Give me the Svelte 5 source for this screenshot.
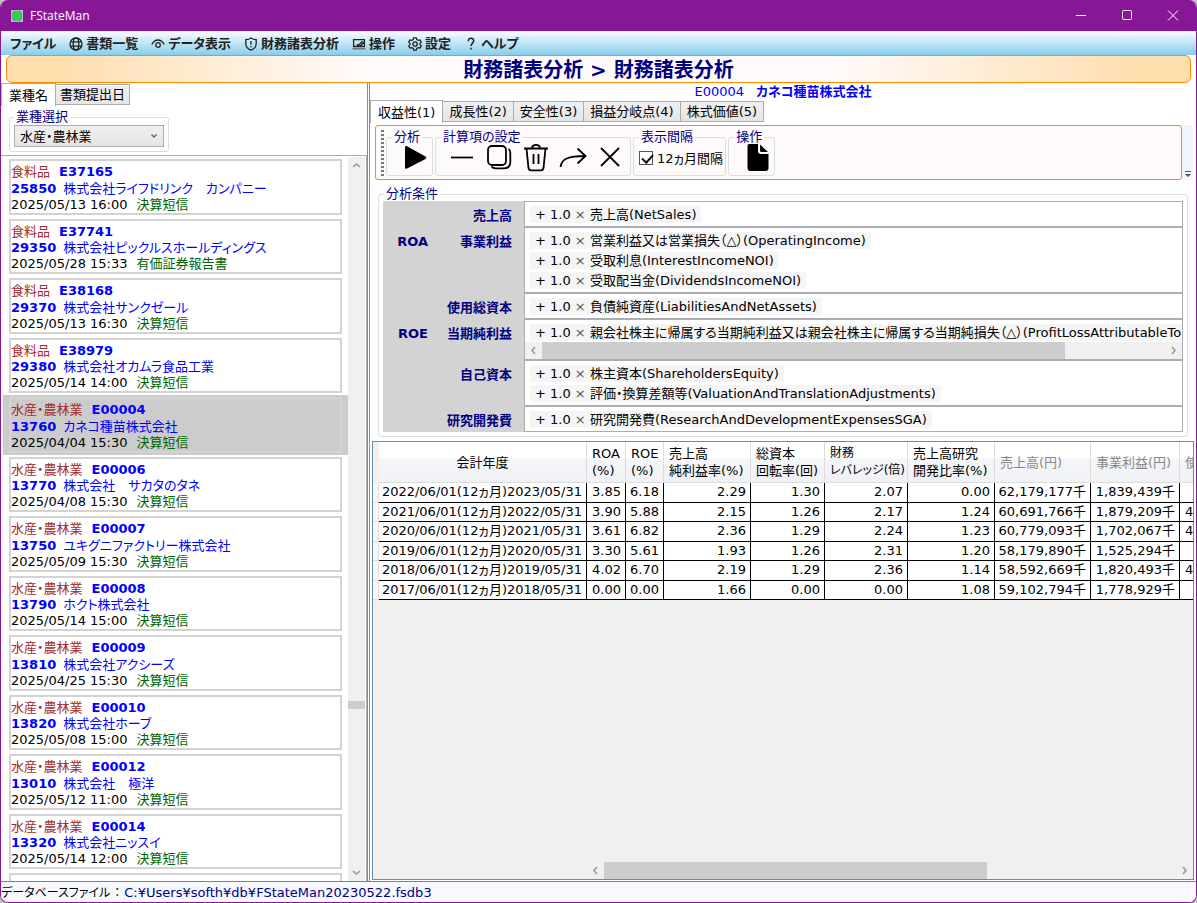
<script lang="ts">
 interface Company {
  sector: string
  edinet: string
  code: string
  name: string
  date: string
  doc: string
 }

 const menus = [
  { icon: '', label: 'ファイル' },
  { icon: 'globe', label: '書類一覧' },
  { icon: 'eye', label: 'データ表示' },
  { icon: 'shield', label: '財務諸表分析' },
  { icon: 'laptop', label: '操作' },
  { icon: 'gear', label: '設定' },
  { icon: 'help', label: 'ヘルプ' }
 ]

 const companies: Company[] = [
  { sector: '食料品', edinet: 'E37165', code: '25850', name: '株式会社ライフドリンク　カンパニー', date: '2025/05/13 16:00', doc: '決算短信' },
  { sector: '食料品', edinet: 'E37741', code: '29350', name: '株式会社ピックルスホールディングス', date: '2025/05/28 15:33', doc: '有価証券報告書' },
  { sector: '食料品', edinet: 'E38168', code: '29370', name: '株式会社サンクゼール', date: '2025/05/13 16:30', doc: '決算短信' },
  { sector: '食料品', edinet: 'E38979', code: '29380', name: '株式会社オカムラ食品工業', date: '2025/05/14 14:00', doc: '決算短信' },
  { sector: '水産・農林業', edinet: 'E00004', code: '13760', name: 'カネコ種苗株式会社', date: '2025/04/04 15:30', doc: '決算短信' },
  { sector: '水産・農林業', edinet: 'E00006', code: '13770', name: '株式会社　サカタのタネ', date: '2025/04/08 15:30', doc: '決算短信' },
  { sector: '水産・農林業', edinet: 'E00007', code: '13750', name: 'ユキグニファクトリー株式会社', date: '2025/05/09 15:30', doc: '決算短信' },
  { sector: '水産・農林業', edinet: 'E00008', code: '13790', name: 'ホクト株式会社', date: '2025/05/14 15:00', doc: '決算短信' },
  { sector: '水産・農林業', edinet: 'E00009', code: '13810', name: '株式会社アクシーズ', date: '2025/04/25 15:30', doc: '決算短信' },
  { sector: '水産・農林業', edinet: 'E00010', code: '13820', name: '株式会社ホーブ', date: '2025/05/08 15:00', doc: '決算短信' },
  { sector: '水産・農林業', edinet: 'E00012', code: '13010', name: '株式会社　極洋', date: '2025/05/12 11:00', doc: '決算短信' },
  { sector: '水産・農林業', edinet: 'E00014', code: '13320', name: '株式会社ニッスイ', date: '2025/05/14 12:00', doc: '決算短信' }
 ]

 const tabs = ['収益性(1)', '成長性(2)', '安全性(3)', '損益分岐点(4)', '株式価値(5)']

 const conditions = [
  { group: '', label: '売上高', terms: ['売上高(NetSales)'] },
  {
   group: 'ROA',
   label: '事業利益',
   terms: ['営業利益又は営業損失（△）(OperatingIncome)', '受取利息(InterestIncomeNOI)', '受取配当金(DividendsIncomeNOI)']
  },
  { group: '', label: '使用総資本', terms: ['負債純資産(LiabilitiesAndNetAssets)'] },
  {
   group: 'ROE',
   label: '当期純利益',
   terms: ['親会社株主に帰属する当期純利益又は親会社株主に帰属する当期純損失（△）(ProfitLossAttributableTo'],
   scroll: true
  },
  { group: '', label: '自己資本', terms: ['株主資本(ShareholdersEquity)', '評価・換算差額等(ValuationAndTranslationAdjustments)'] },
  { group: '', label: '研究開発費', terms: ['研究開発費(ResearchAndDevelopmentExpensesSGA)'] }
 ]

 const columns = [
  { lines: ['会計年度'], width: 208 },
  { lines: ['ROA', '(%)'], width: 39 },
  { lines: ['ROE', '(%)'], width: 38 },
  { lines: ['売上高', '純利益率(%)'], width: 87 },
  { lines: ['総資本', '回転率(回)'], width: 74 },
  { lines: ['財務', 'レバレッジ(倍)'], width: 83, narrow: true },
  { lines: ['売上高研究', '開発比率(%)'], width: 87 },
  { lines: ['売上高(円)'], width: 96, muted: true },
  { lines: ['事業利益(円)'], width: 89, muted: true },
  { lines: ['使'], width: 97, muted: true }
 ]

 const rows = [
  ['2022/06/01(12ヵ月)2023/05/31', '3.85', '6.18', '2.29', '1.30', '2.07', '0.00', '62,179,177千', '1,839,439千', ''],
  ['2021/06/01(12ヵ月)2022/05/31', '3.90', '5.88', '2.15', '1.26', '2.17', '1.24', '60,691,766千', '1,879,209千', '4'],
  ['2020/06/01(12ヵ月)2021/05/31', '3.61', '6.82', '2.36', '1.29', '2.24', '1.23', '60,779,093千', '1,702,067千', '4'],
  ['2019/06/01(12ヵ月)2020/05/31', '3.30', '5.61', '1.93', '1.26', '2.31', '1.20', '58,179,890千', '1,525,294千', ''],
  ['2018/06/01(12ヵ月)2019/05/31', '4.02', '6.70', '2.19', '1.29', '2.36', '1.14', '58,592,669千', '1,820,493千', '4'],
  ['2017/06/01(12ヵ月)2018/05/31', '0.00', '0.00', '1.66', '0.00', '0.00', '1.08', '59,102,794千', '1,778,929千', '']
 ]

 let selected = $state('E00004')
 let activeTab = $state(0)
 let everyYear = $state(true)
</script>

{#snippet chevron(d: string)}
 <svg width="9" height="9" viewBox="0 0 9 9" fill="none" stroke="#9a9a9a" stroke-width="1.6"><path {d} /></svg>
{/snippet}

{#snippet hscroll(thumb: number)}
 <div class="hscroll">
  <button aria-label="左へ">{@render chevron('M6 1L3 4.5L6 8')}</button>
  <div class="track"><div class="thumb" style="width: {thumb}%"></div></div>
  <button aria-label="右へ">{@render chevron('M3 1L6 4.5L3 8')}</button>
 </div>
{/snippet}

<div class="window">
 <header class="titlebar">
  <svg width="12" height="12" viewBox="0 0 12 12">
   <rect width="12" height="12" fill="#b9b9c4" />
   <path d="M1 4L4 1M8 1L11 4M1 8L4 11M11 8L8 11" stroke="#5a5ad0" />
   <circle cx="6" cy="6" r="5" fill="#2fd04a" />
  </svg>
  <span class="app-name">FStateMan</span>
  <button aria-label="最小化">
   <svg width="12" height="12" viewBox="0 0 12 12"><path d="M1 5.5H11" /></svg>
  </button>
  <button aria-label="最大化">
   <svg width="12" height="12" viewBox="0 0 12 12"><rect x="1.5" y="0.5" width="9" height="9" rx="1" /></svg>
  </button>
  <button aria-label="閉じる">
   <svg width="12" height="12" viewBox="0 0 12 12"><path d="M1 0.500L11 10.500M11 0.500L1 10.500" /></svg>
  </button>
 </header>

 <nav class="menubar">
  {#each menus as menu}
   <button>
    {#if menu.icon}
     <svg width="14" height="14" viewBox="0 0 14 14" fill="none" stroke="#222" stroke-width="1.3">
      {#if menu.icon === 'globe'}
       <circle cx="7" cy="7" r="6" />
       <ellipse cx="7" cy="7" rx="2.8" ry="6" />
       <path d="M1.6 4.8H12.4M1.6 9.2H12.4" />
      {:else if menu.icon === 'eye'}
       <path d="M0.8 7.5C2.5 4.3 4.5 3 7 3S11.5 4.3 13.2 7.5" />
       <circle cx="7" cy="8" r="2.3" />
      {:else if menu.icon === 'shield'}
       <path d="M7 0.9C8.6 2.1 10.3 2.6 12.2 2.7V6.5C12.2 9.8 10.3 12 7 13.2C3.7 12 1.8 9.8 1.8 6.5V2.7C3.7 2.6 5.4 2.1 7 0.9Z" />
       <path d="M7 4V7.800M7 9V10.300" />
      {:else if menu.icon === 'laptop'}
       <path d="M1.6 9.5V2.6H12.4V9.5ZM5.5 9.3L10.500 4.200M5.500 9.300V7M8 9.300L12 5" />
       <path d="M0.5 11.800H13.500" stroke="#777" stroke-width="1.6" />
      {:else if menu.icon === 'gear'}
       <path d="M5.7 0.8H8.3L8.8 2.6L10.2 3.4L12 2.9L13.3 5.1L12 6.4V7.6L13.3 8.9L12 11.1L10.2 10.6L8.8 11.4L8.3 13.2H5.7L5.2 11.4L3.8 10.6L2 11.1L0.7 8.900L2 7.600V6.400L0.700 5.100L2 2.900L3.800 3.400L5.200 2.600Z" />
       <circle cx="7" cy="7" r="2.2" />
      {:else}
       <path d="M4.3 4.2C4.3 2.3 5.4 1.3 7 1.3S9.7 2.3 9.7 4C9.7 6 7 6.3 7 9M7 10.8V12.4" stroke-width="1.5" />
      {/if}
     </svg>
    {/if}
    {menu.label}
   </button>
  {/each}
 </nav>

 <h1>財務諸表分析 &gt; 財務諸表分析</h1>

 <main>
  <aside>
   <div class="tabs">
    <button class="active">業種名</button>
    <button>書類提出日</button>
   </div>
   <fieldset class="sector">
    <legend><label for="sector">業種選択</label></legend>
    <div class="select-wrap">
     <select id="sector">
      <option>水産・農林業</option>
      <option>食料品</option>
     </select>
     <svg width="8" height="6" viewBox="0 0 8 6" fill="none" stroke="#606060" stroke-width="1.3"><path d="M1.5 1.5L4 4L6.5 1.5" /></svg>
    </div>
   </fieldset>
   <div class="list">
    <ul>
     {#each companies as company}
      <li class:selected={company.edinet === selected}>
       <button onclick={() => (selected = company.edinet)}>
        <span><span class="sector-name">{company.sector}</span><b>{company.edinet}</b></span>
        <span class="blue"><b>{company.code}</b>{company.name}</span>
        <span><span class="date">{company.date}</span><span class="doc">{company.doc}</span></span>
       </button>
      </li>
     {/each}
     <li><button aria-label="次の会社"></button></li>
    </ul>
    <div class="vscroll">
     <button aria-label="上へ">{@render chevron('M1 6L4.5 3L8 6')}</button>
     <div class="track">
      <div class="thumb"></div>
     </div>
     <button aria-label="下へ">{@render chevron('M1 3L4.5 6L8 3')}</button>
    </div>
   </div>
  </aside>

  <div class="splitter"></div>

  <section>
   <p class="company"><span>E00004</span><b>カネコ種苗株式会社</b></p>
   <div class="tabs">
    {#each tabs as tab, i}
     <button class:active={i === activeTab} onclick={() => (activeTab = i)}>{tab}</button>
    {/each}
   </div>

   <div class="toolbar-tray">
    <div class="toolbar">
     <div class="grip"></div>
     <fieldset class="single">
      <legend>分析</legend>
      <div class="tools">
       <button aria-label="実行">
        <svg width="28" height="28" viewBox="0 0 28 28">
         <path d="M3 3.5V23.5Q3 25.5 5 24.5L23.5 15Q25.300 13.700 23.500 12.500L5 2.300Q3 1.500 3 3.500Z" fill="#000" stroke="none" />
        </svg>
       </button>
      </div>
     </fieldset>
     <fieldset>
      <legend>計算項の設定</legend>
      <div class="tools wide">
       <button aria-label="減算">
        <svg width="28" height="28" viewBox="0 0 28 28"><path d="M3 13.500H25" /></svg>
       </button>
       <button aria-label="複製">
        <svg width="28" height="28" viewBox="0 0 28 28">
         <rect x="3" y="2" width="18" height="19" rx="4" />
         <path d="M23.5 5C25 6 25.3 7.5 25.3 9V18C25.3 22 23 24.3 19 24.3H11C9 24.3 7.5 24 6.5 22.5" />
        </svg>
       </button>
       <button aria-label="削除">
        <svg width="28" height="28" viewBox="0 0 28 28">
         <path d="M2 4.5H26M10 4.5C10 -0.3 18 -0.3 18 4.5M4.5 4.5L6.500 24Q7 26.300 9 26.300H19Q21 26.300 21.500 24L23.500 4.500M11.500 10V20M16.500 10V20" />
        </svg>
       </button>
       <button aria-label="移動">
        <svg width="28" height="28" viewBox="0 0 28 28"><path d="M1.5 23C2.5 15 9 12 26 12M18.5 4.5L26.5 12L18.5 19.5" /></svg>
       </button>
       <button aria-label="クリア">
        <svg width="28" height="28" viewBox="0 0 28 28"><path d="M5 4L23 22M23 4L5 22" /></svg>
       </button>
      </div>
     </fieldset>
     <fieldset>
      <legend>表示間隔</legend>
      <label class="check">
       <input type="checkbox" bind:checked={everyYear} />
       12ヵ月間隔
      </label>
     </fieldset>
     <fieldset class="single">
      <legend>操作</legend>
      <div class="tools">
       <button aria-label="文書">
        <svg width="28" height="28" viewBox="0 0 28 28">
         <path d="M5 0H14V7Q14 10 17 10H24.500V24Q24.500 27 21.500 27H6.500Q3.500 27 3.500 24V2Q3.500 0 5 0ZM16 0.500L24 8H17.500Q16 8 16 6.500Z" fill="#000" stroke="none" />
        </svg>
       </button>
      </div>
     </fieldset>
    </div>
    <div class="overflow">
     <svg width="6" height="6" viewBox="0 0 6 6" fill="#555"><path d="M0 0H6V1H0ZM0 3H6L3 6Z" /></svg>
    </div>
   </div>

   <fieldset class="conditions">
    <legend>分析条件</legend>
    <div class="condition-rows">
     {#each conditions as condition}
      <div class="condition">
       <b>{condition.group}</b>
       <b class="item">{condition.label}</b>
       <div class="terms">
        <ul>
         {#each condition.terms as term}
          <li>+ 1.0 <i>×</i> {term}</li>
         {/each}
        </ul>
        {#if condition.scroll}
         {@render hscroll(84)}
        {/if}
       </div>
      </div>
     {/each}
    </div>
   </fieldset>

   <div class="grid">
    <div class="grid-body">
     <table>
      <colgroup>
       <col class="row-head" />
       {#each columns as column}
        <col style="width: {column.width}px" />
       {/each}
      </colgroup>
      <thead>
       <tr>
        <td></td>
        {#each columns as column}
         <th class:muted={column.muted} class:narrow={column.narrow}>
          {#each column.lines as line}<div>{line}</div>{/each}
         </th>
        {/each}
       </tr>
      </thead>
      <tbody>
       {#each rows as row}
        <tr>
         <td></td>
         {#each row as value}
          <td>{value}</td>
         {/each}
        </tr>
       {/each}
      </tbody>
     </table>
    </div>
    <div class="grid-scroll">{@render hscroll(67)}</div>
   </div>
  </section>
 </main>

 <footer>
  <span class="caption">データベースファイル ：</span>
  <span class="path">C:¥Users¥softh¥db¥FStateMan20230522.fsdb3</span>
 </footer>
</div>

<style>
 :global(body) {
  background: #c4c4c8;
 }

 .window,
 .window * {
  box-sizing: border-box;
 }

 .window {
  display: flex;
  flex-direction: column;
  height: 100vh;
  overflow: hidden;
  border: 1px solid #881798;
  border-top: none;
  border-radius: 8px;
  background: #fff;
  color: #000;
  font-family: "DejaVu Sans", "Noto Sans CJK JP", sans-serif;
  font-feature-settings: "palt";
  font-size: 13px;
  line-height: 17px;
  white-space: nowrap;
 }

 button,
 select {
  margin: 0;
  padding: 0;
  border: none;
  background: none;
  color: inherit;
  font: inherit;
  font-feature-settings: inherit;
 }

 svg {
  display: block;
  flex: none;
 }

 ul {
  margin: 0;
  padding: 0;
  list-style: none;
 }

 .titlebar {
  display: flex;
  align-items: center;
  flex: none;
  height: 31px;
  padding-left: 10px;
  background: #881798;
  color: #fff;
 }

 .app-name {
  flex: 1;
  padding-left: 7px;
  font-family: "Open Sans", sans-serif;
  font-size: 12px;
 }

 .titlebar button {
  display: flex;
  justify-content: center;
  width: 46px;
 }

 .titlebar button svg {
  fill: none;
  stroke: #fff;
 }

 .menubar {
  display: flex;
  gap: 13px;
  flex: none;
  height: 24px;
  padding: 1px 9px 0;
  background: linear-gradient(#f0f8ff 10%, #87ceeb);
  color: #222;
  font-weight: bold;
 }

 .menubar button {
  display: flex;
  align-items: center;
  gap: 3px;
 }

 h1 {
  flex: none;
  margin: 0 5px;
  padding-top: 2px;
  border: 1px solid #ff8c00;
  border-radius: 6px;
  background: linear-gradient(90deg, #ffdead 4%, #fffafa 30%, #fffafa 70%, #ffdead 96%);
  color: #000080;
  font-size: 20px;
  line-height: 24px;
  text-align: center;
 }

 main {
  display: flex;
  flex: 1;
  min-height: 0;
 }

 aside {
  display: flex;
  flex-direction: column;
  flex: none;
  width: 366px;
 }

 .splitter {
  flex: none;
  width: 3px;
  border: solid #7b9494;
  border-width: 0 1px;
 }

 section {
  display: flex;
  flex-direction: column;
  flex: 1;
  min-width: 0;
 }

 .tabs {
  display: flex;
  align-items: flex-end;
  flex: none;
 }

 .tabs button {
  height: 21px;
  margin-bottom: 1px;
  padding: 0 4px;
  border: 1px solid #acacac;
  border-left: none;
  background: linear-gradient(#f0f0f0, #e5e5e5);
 }

 section .tabs button {
  padding: 0 6px;
 }

 .tabs .active,
 section .tabs .active {
  height: 23px;
  margin-bottom: 0;
  padding: 0 7px;
  border-bottom: none;
  border-left: 1px solid #acacac;
  background: #fff;
 }

 fieldset {
  min-width: 0;
  margin: 0;
  padding: 0 2px 3px 5px;
  border: 1px solid #d5dfe5;
  border-radius: 3px;
 }

 legend {
  padding: 0 2px;
  color: #000080;
  line-height: 14px;
 }

 .sector {
  align-self: flex-start;
  margin: 4px 0 3px 8px;
  padding: 1px 4px 4px;
 }

 .select-wrap {
  display: flex;
  align-items: center;
 }

 .select-wrap svg {
  margin-right: 6px;
  margin-left: -14px;
  pointer-events: none;
 }

 select {
  width: 150px;
  height: 22px;
  padding: 0 5px;
  border: 1px solid #acacac;
  background: linear-gradient(#f0f0f0, #e5e5e5);
  appearance: none;
 }

 .list {
  display: flex;
  flex: 1;
  min-height: 0;
  padding: 1px 1px 0 2px;
  border: 1px solid #acacac;
  border-width: 1px 1px 0 0;
 }

 .list ul {
  display: grid;
  grid-auto-rows: 60px 59px;
  flex: 1;
  overflow: hidden;
 }

 .list li {
  padding: 2px 6px;
 }

 .list li.selected {
  background: #ccc;
 }

 .list li button {
  display: flex;
  flex-direction: column;
  justify-content: space-between;
  width: 100%;
  height: 100%;
  padding-top: 3px;
  border: 2px solid #d3d3d3;
  line-height: 16px;
  text-align: left;
 }

 .list b,
 .blue {
  color: #00f;
 }

 .sector-name,
 .date {
  margin-right: 9px;
 }

 .blue b {
  margin-right: 7px;
 }

 .sector-name {
  color: #a52a2a;
 }

 .doc {
  color: #006400;
 }

 .vscroll {
  display: flex;
  flex-direction: column;
  width: 17px;
  background: #f0f0f0;
 }

 .vscroll button,
 .hscroll button {
  display: flex;
  align-items: center;
  justify-content: center;
  flex: none;
  width: 17px;
  height: 17px;
 }

 .track {
  flex: 1;
 }

 .thumb {
  height: 100%;
  background: #cdcdcd;
 }

 .vscroll .track {
  display: grid;
  grid-template-rows: 78fr 8px 23fr;
 }

 .vscroll .thumb {
  grid-row: 2;
 }

 .hscroll {
  display: flex;
  height: 17px;
  background: #f0f0f0;
 }

 .company {
  display: flex;
  justify-content: center;
  gap: 12px;
  margin: 0;
  padding-top: 1px;
  color: #00f;
  line-height: 16px;
 }

 .toolbar-tray {
  display: flex;
  flex: none;
  height: 55px;
  margin: 2px 3px 0 5px;
 }

 .toolbar {
  display: flex;
  gap: 2px;
  flex: 1;
  padding: 4px 0 3px 5px;
  border: 1px solid #ff8c00;
  border-radius: 3px;
  background: #fffafa;
 }

 .grip {
  width: 3px;
  background: repeating-linear-gradient(#777 0 2px, transparent 2px 4px);
 }

 .overflow {
  display: flex;
  align-items: flex-end;
  justify-content: center;
  width: 11px;
  padding-bottom: 3px;
  border-radius: 0 3px 3px 0;
  background: #eef5fd;
 }

 .single {
  width: 47px;
 }

 .tools {
  display: flex;
  justify-content: flex-end;
 }

 .tools.wide {
  padding-left: 2px;
 }

 .tools.wide button {
  display: flex;
  justify-content: center;
  width: 37px;
 }

 .tools svg {
  fill: none;
  stroke: #000;
  stroke-width: 1.8;
 }

 .check {
  display: flex;
  align-items: center;
  gap: 4px;
  height: 28px;
 }

 .check input {
  width: 14px;
  height: 14px;
  margin: 0;
  border: 1px solid #555;
  background: #fff;
  appearance: none;
 }

 .check input:checked::before {
  content: "";
  display: block;
  width: 5px;
  height: 9px;
  margin-left: 4px;
  border: solid #111;
  border-width: 0 2px 2px 0;
  transform: rotate(42deg);
 }

 .conditions {
  flex: none;
  margin: 7px 8px 4px;
  padding: 0 4px 4px;
 }

 .conditions legend {
  margin-left: 1px;
 }

 .condition {
  display: grid;
  grid-template-columns: 45px 96px minmax(0, 1fr);
  background: #d3d3d3;
 }

 .condition b {
  padding-top: 6px;
  color: #000080;
  text-align: right;
 }

 .condition .item {
  padding-right: 12px;
 }

 .terms {
  border: 1px solid #abadb3;
  background: #fff;
  overflow: hidden;
 }

 .terms ul {
  display: flex;
  flex-direction: column;
  align-items: flex-start;
  gap: 3px;
  padding: 4px 5px 3px;
 }

 .terms li {
  padding: 0 5px;
  background: #f5f5f5;
 }

 .terms i {
  color: #555;
  font-style: normal;
 }

 .terms ul:not(:last-child) {
  padding-bottom: 1px;
 }

 .grid {
  display: flex;
  flex-direction: column;
  flex: 1;
  min-height: 0;
  margin: 0 2px 1px;
  border: 1px solid #688caf;
  background: #f0f0f0;
 }

 .grid-body {
  flex: 1;
  overflow: hidden;
 }

 .grid-scroll {
  padding-left: 214px;
 }

 table {
  width: 904px;
  height: 158px;
  border-collapse: separate;
  border-spacing: 0;
  table-layout: fixed;
 }

 .row-head {
  width: 6px;
 }

 thead tr {
  height: 41px;
 }

 th {
  padding: 0 0 0 5px;
  border-right: 1px solid #dcdcdc;
  border-bottom: 1px solid #dcdcdc;
  background: linear-gradient(#fff 40%, #f5f6f8 42%, #f0f1f4);
  font-weight: normal;
  text-align: left;
 }

 th:nth-child(2) {
  padding: 0;
  text-align: center;
 }

 th.muted {
  color: #888;
 }

 th.narrow {
  font-size: 12px;
 }

 tbody td {
  padding: 0 4px 0 0;
  border: solid #000;
  border-width: 0 1px 1px 0;
  background: #fff;
  line-height: 16px;
  text-align: right;
 }

 tbody td:first-child {
  border-color: #dcdcdc;
  background: #f7f7f7;
 }

 tbody td:last-child {
  padding-left: 5px;
  text-align: left;
 }

 footer {
  flex: none;
  height: 21px;
  padding-top: 2px;
  border-top: 1px solid #808080;
  background: #f8f8ff;
 }

 .caption {
  font-size: 12px;
 }

 .path {
  color: #000080;
 }
</style>
